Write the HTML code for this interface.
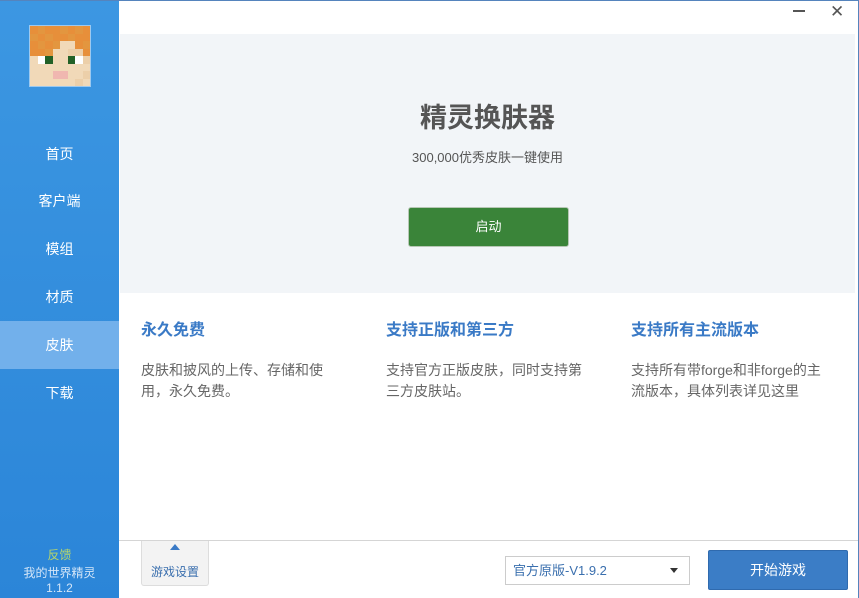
<!DOCTYPE html>
<html><head><meta charset="utf-8"><style>
*{margin:0;padding:0;box-sizing:border-box}
body{width:859px;height:598px;overflow:hidden;background:#fff;font-family:"Liberation Sans","Noto Sans CJK SC",sans-serif;position:relative}
.side{position:absolute;left:0;top:0;width:119px;height:598px;background:linear-gradient(#3c97e2,#2b85d8)}
.av{position:absolute;left:29px;top:25px;width:62px;height:62px;border:1px solid #9cc9f0;background:#f1d9b8;overflow:hidden}
.av div{position:absolute}
.nav{position:absolute;left:0;width:119px;height:48px;line-height:48px;text-align:center;color:#fff;font-size:14px}
.act{background:#72b0eb}
.topb{position:absolute;left:0;top:0;width:859px;height:1px;background:#5584bd}
.rb{position:absolute;right:0;top:0;width:1px;height:598px;background:#5584bd}
.hero{position:absolute;left:120px;top:34px;width:735px;height:259px;background:#f2f5f8}
.col{position:absolute;top:316px;width:197px}
.col h3{font-size:16px;color:#3a7ac6;font-weight:bold;margin-bottom:20px}
.col p{font-size:14px;color:#666;line-height:21px}
</style></head><body>
<div class="side">
<div class="av" id="av"></div>
<div class="nav" style="top:130px">首页</div>
<div class="nav" style="top:177px">客户端</div>
<div class="nav" style="top:225px">模组</div>
<div class="nav" style="top:273px">材质</div>
<div class="nav act" style="top:321px">皮肤</div>
<div class="nav" style="top:369px">下载</div>
<div style="position:absolute;top:546px;width:119px;text-align:center;font-size:12px;color:#b7d66a">反馈</div>
<div style="position:absolute;top:566px;width:119px;text-align:center;font-size:12px;color:#d4e6f8;line-height:15px">我的世界精灵<br>1.1.2</div>
</div>
<div class="topb"></div><div class="rb"></div>
<div style="position:absolute;left:793px;top:10px;width:12px;height:2px;background:#555"></div>
<div style="position:absolute;left:830px;top:2px;font-size:17px;color:#555">✕</div>
<div class="hero">
<div style="position:absolute;top:62px;width:100%;text-align:center;font-size:27px;font-weight:bold;color:#555">精灵换肤器</div>
<div style="position:absolute;top:113px;width:100%;text-align:center;font-size:13px;color:#555">300,000优秀皮肤一键使用</div>
<div style="position:absolute;left:288px;top:173px;width:161px;height:40px;background:#3a8439;border:1px solid #b7c7b5;border-radius:3px;color:#fff;font-size:13px;text-align:center;line-height:38px">启动</div>
</div>
<div class="col" style="left:141px"><h3>永久免费</h3><p>皮肤和披风的上传、存储和使用，永久免费。</p></div>
<div class="col" style="left:386px"><h3>支持正版和第三方</h3><p>支持官方正版皮肤，同时支持第三方皮肤站。</p></div>
<div class="col" style="left:631px"><h3>支持所有主流版本</h3><p>支持所有带forge和非forge的主流版本，具体列表详见这里</p></div>
<div style="position:absolute;left:119px;top:540px;width:739px;height:1px;background:#d5d5d5"></div>
<div style="position:absolute;left:141px;top:541px;width:68px;height:45px;background:#f3f3f3;border:1px solid #ddd;border-top:none;border-radius:0 0 3px 3px;text-align:center;font-size:12px;color:#3a6fae">
<div style="width:0;height:0;margin:3px auto 0;border-left:5px solid transparent;border-right:5px solid transparent;border-bottom:6px solid #3a7ac6"></div>
<div style="margin-top:13px">游戏设置</div></div>
<div style="position:absolute;left:505px;top:556px;width:185px;height:29px;border:1px solid #ccc;font-size:13px;color:#3a6fae;line-height:27px;padding-left:7px">官方原版-V1.9.2<span style="position:absolute;right:11px;top:11px;border-left:4px solid transparent;border-right:4px solid transparent;border-top:5px solid #333"></span></div>
<div style="position:absolute;left:708px;top:550px;width:140px;height:40px;background:#3b7dc6;border:1px solid #2f6aae;border-radius:2px;color:#fff;font-size:14px;text-align:center;line-height:38px">开始游戏</div>
<script>
var O='#e78f3a',o='#e3963f',S='#f1d9b8',s='#eccfa9',W='#fff',G='#236127',P='#f0b7b0';
var m=[[O,o,O,O,o,O,o,O],[o,O,o,O,O,o,O,O],[O,o,O,o,S,S,O,o],[O,O,o,S,S,s,s,O],[S,W,G,S,S,G,W,s],[S,S,S,S,S,S,S,S],[S,S,S,P,P,S,S,s],[S,S,S,S,S,S,s,S]];
var a=document.getElementById('av');m.forEach(function(r,y){r.forEach(function(c,x){var d=document.createElement('div');d.style.background=c;d.style.left=(x*7.5)+'px';d.style.top=(y*7.5)+'px';d.style.width='8px';d.style.height='8px';a.appendChild(d)})});
</script>
</body></html>
